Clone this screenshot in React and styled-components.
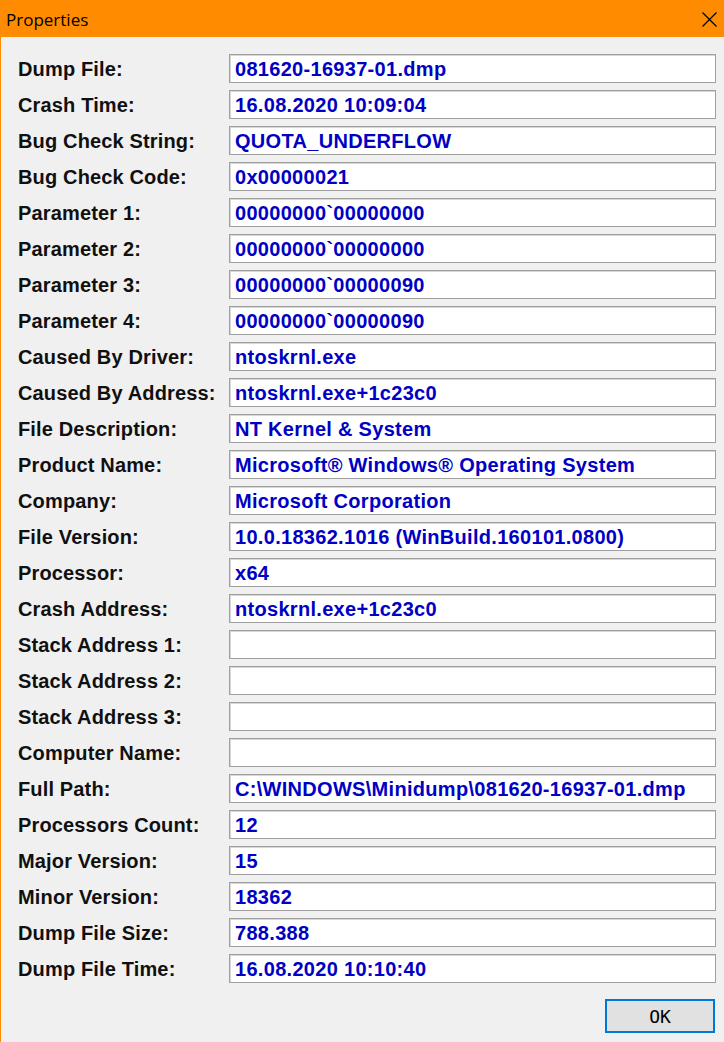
import React from "react";
import styled, { createGlobalStyle } from "styled-components";

const Global = createGlobalStyle`
  html, body { margin: 0; padding: 0; background: #f0f0f0; }
  #root { width: 724px; height: 1042px; }
`;

const Window = styled.div`
  width: 724px;
  height: 1042px;
  box-sizing: border-box;
  border-left: 1px solid #ff8c00;
  background: #f0f0f0;
  display: flex;
  flex-direction: column;
  overflow: hidden;
`;

const TitleBar = styled.div`
  height: 37px;
  flex: none;
  background: #ff8c00;
  display: flex;
  align-items: center;
  justify-content: space-between;
  padding: 0 7px 0 6px;
  margin-left: -1px;
`;

const Title = styled.span`
  font-family: "Open Sans", "Noto Sans", sans-serif;
  font-size: 17px;
  color: #000;
  margin-top: 1px;
`;

const CloseButton = styled.svg`
  width: 15px;
  height: 15px;
  display: block;
  margin-top: 1px;
`;

const Body = styled.div`
  flex: 1;
  display: flex;
  flex-direction: column;
  padding: 17px 8px 0 17px;
`;

const Form = styled.div`
  display: grid;
  grid-template-columns: 211px 1fr;
  grid-auto-rows: 29px;
  row-gap: 7px;
`;

const Label = styled.div`
  font-family: "Liberation Sans", Arial, sans-serif;
  font-weight: bold;
  font-size: 20px;
  letter-spacing: 0.15px;
  color: #101010;
  display: flex;
  align-items: center;
  padding-top: 2px;
  white-space: nowrap;
`;

const Field = styled.div`
  box-sizing: border-box;
  height: 29px;
  background: #fff;
  border: 1px solid #a0a0a0;
  box-shadow: inset 1px 1px 0 #d6d6d6;
  padding: 0 5px;
  font-family: "Liberation Sans", Arial, sans-serif;
  font-weight: bold;
  font-size: 20px;
  letter-spacing: 0.3px;
  line-height: 29px;
  color: #0000c4;
  white-space: nowrap;
  overflow: hidden;
`;

const Footer = styled.div`
  display: flex;
  justify-content: flex-end;
  padding: 16px 1px 0 0;
`;

const OkButton = styled.button`
  width: 110px;
  height: 34px;
  box-sizing: border-box;
  border: 2px solid #0078d7;
  background: #e1e1e1;
  font-family: "DejaVu Sans Mono", "Liberation Mono", monospace;
  font-size: 18px;
  color: #000;
  padding: 0;
  cursor: default;
`;

const rows = [
  ["Dump File:", "081620-16937-01.dmp"],
  ["Crash Time:", "16.08.2020 10:09:04"],
  ["Bug Check String:", "QUOTA_UNDERFLOW"],
  ["Bug Check Code:", "0x00000021"],
  ["Parameter 1:", "00000000`00000000"],
  ["Parameter 2:", "00000000`00000000"],
  ["Parameter 3:", "00000000`00000090"],
  ["Parameter 4:", "00000000`00000090"],
  ["Caused By Driver:", "ntoskrnl.exe"],
  ["Caused By Address:", "ntoskrnl.exe+1c23c0"],
  ["File Description:", "NT Kernel & System"],
  ["Product Name:", "Microsoft® Windows® Operating System"],
  ["Company:", "Microsoft Corporation"],
  ["File Version:", "10.0.18362.1016 (WinBuild.160101.0800)"],
  ["Processor:", "x64"],
  ["Crash Address:", "ntoskrnl.exe+1c23c0"],
  ["Stack Address 1:", ""],
  ["Stack Address 2:", ""],
  ["Stack Address 3:", ""],
  ["Computer Name:", ""],
  ["Full Path:", "C:\\WINDOWS\\Minidump\\081620-16937-01.dmp"],
  ["Processors Count:", "12"],
  ["Major Version:", "15"],
  ["Minor Version:", "18362"],
  ["Dump File Size:", "788.388"],
  ["Dump File Time:", "16.08.2020 10:10:40"],
];

export default function App() {
  return (
    <>
      <Global />
      <Window>
        <TitleBar>
          <Title>Properties</Title>
          <CloseButton viewBox="0 0 15 15">
            <path d="M0.5 0.5 L14.5 14.5 M14.5 0.5 L0.5 14.5" stroke="#000" strokeWidth="1.2" fill="none" />
          </CloseButton>
        </TitleBar>
        <Body>
          <Form>
            {rows.map(([label, value]) => (
              <React.Fragment key={label}>
                <Label>{label}</Label>
                <Field>{value}</Field>
              </React.Fragment>
            ))}
          </Form>
          <Footer>
            <OkButton>OK</OkButton>
          </Footer>
        </Body>
      </Window>
    </>
  );
}
